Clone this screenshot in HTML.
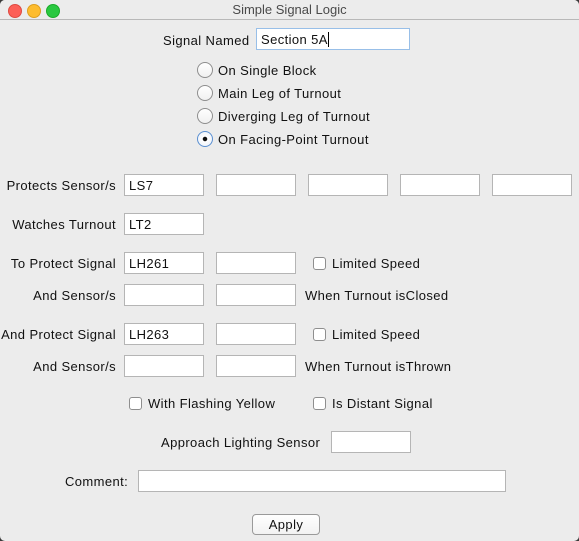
<!DOCTYPE html>
<html><head><meta charset="utf-8"><style>
body{margin:0;width:579px;height:541px;background:#3a3a3a;overflow:hidden;font-family:"Liberation Sans","DejaVu Sans",sans-serif;font-size:13px;color:#111}
.win{position:absolute;left:0;top:0;width:579px;height:541px;background:#ececec;border-radius:5px 5px 5px 5px;overflow:hidden}
.tb{position:absolute;left:0;top:0;width:579px;height:19px;background:#ececec;border-bottom:1px solid #b8b8b8;text-align:center;line-height:19px;color:#4a4a4a;font-size:13px}
.dot{position:absolute;top:4px;width:12px;height:12px;border-radius:50%}
.a{position:absolute;white-space:nowrap;line-height:16px;letter-spacing:0.4px}
.r{text-align:right}
.f{position:absolute;width:78px;height:20px;background:#fff;border:1px solid #b5b5b5;box-sizing:content-box;line-height:21px;padding-left:0;letter-spacing:0.4px}
.f span{padding-left:4px}
.rb{position:absolute;width:14px;height:14px;border-radius:50%;border:1px solid #8e8e8e;background:linear-gradient(#fff,#f0f0f0)}
.cb{position:absolute;width:11px;height:11px;border-radius:3px;border:1px solid #8e8e8e;background:#fff}
</style></head><body><div class="win">
<div class="tb">Simple Signal Logic</div>
<div class="dot" style="left:8px;background:#fc5f57;border:0.5px solid #de4a41"></div>
<div class="dot" style="left:27px;background:#fdbc2e;border:0.5px solid #de9f1f"></div>
<div class="dot" style="left:46px;background:#29c840;border:0.5px solid #1aab29"></div>

<div class="a" style="left:163px;top:33px">Signal Named</div>
<div class="f" style="left:256px;top:28px;width:152px;border-color:#98bfe8"><span>Section 5A</span><span style="display:inline-block;width:1px;height:15px;background:#000;vertical-align:-3px;padding:0"></span></div>

<div class="rb" style="left:197px;top:62px"></div><div class="a" style="left:218px;top:63px">On Single Block</div>
<div class="rb" style="left:197px;top:85px"></div><div class="a" style="left:218px;top:86px">Main Leg of Turnout</div>
<div class="rb" style="left:197px;top:108px"></div><div class="a" style="left:218px;top:109px">Diverging Leg of Turnout</div>
<div class="rb" style="left:197px;top:131px;border-color:#5a8fd0;background:radial-gradient(circle,#111 0 2px,#fff 2.5px,#e8eef8 100%)"></div><div class="a" style="left:218px;top:132px">On Facing-Point Turnout</div>

<div class="a r" style="right:463px;top:178px">Protects Sensor/s</div>
<div class="f" style="left:124px;top:174px"><span>LS7</span></div>
<div class="f" style="left:216px;top:174px"></div>
<div class="f" style="left:308px;top:174px"></div>
<div class="f" style="left:400px;top:174px"></div>
<div class="f" style="left:492px;top:174px"></div>

<div class="a r" style="right:463px;top:217px">Watches Turnout</div>
<div class="f" style="left:124px;top:213px"><span>LT2</span></div>

<div class="a r" style="right:463px;top:256px">To Protect Signal</div>
<div class="f" style="left:124px;top:252px"><span>LH261</span></div>
<div class="f" style="left:216px;top:252px"></div>
<div class="cb" style="left:313px;top:257px"></div><div class="a" style="left:332px;top:256px">Limited Speed</div>

<div class="a r" style="right:463px;top:288px">And Sensor/s</div>
<div class="f" style="left:124px;top:284px"></div>
<div class="f" style="left:216px;top:284px"></div>
<div class="a" style="left:305px;top:288px">When Turnout isClosed</div>

<div class="a r" style="right:463px;top:327px">And Protect Signal</div>
<div class="f" style="left:124px;top:323px"><span>LH263</span></div>
<div class="f" style="left:216px;top:323px"></div>
<div class="cb" style="left:313px;top:328px"></div><div class="a" style="left:332px;top:327px">Limited Speed</div>

<div class="a r" style="right:463px;top:359px">And Sensor/s</div>
<div class="f" style="left:124px;top:355px"></div>
<div class="f" style="left:216px;top:355px"></div>
<div class="a" style="left:305px;top:359px">When Turnout isThrown</div>

<div class="cb" style="left:129px;top:397px"></div><div class="a" style="left:148px;top:396px">With Flashing Yellow</div>
<div class="cb" style="left:313px;top:397px"></div><div class="a" style="left:332px;top:396px">Is Distant Signal</div>

<div class="a" style="left:161px;top:435px">Approach Lighting Sensor</div>
<div class="f" style="left:331px;top:431px"></div>

<div class="a" style="left:65px;top:474px">Comment:</div>
<div class="f" style="left:138px;top:470px;width:366px"></div>

<div style="position:absolute;left:252px;top:514px;width:66px;height:19px;border:1px solid #9a9a9a;border-radius:4px;background:linear-gradient(#fff,#f2f2f2);text-align:center;line-height:19px;letter-spacing:0.4px">Apply</div>
</div></body></html>
